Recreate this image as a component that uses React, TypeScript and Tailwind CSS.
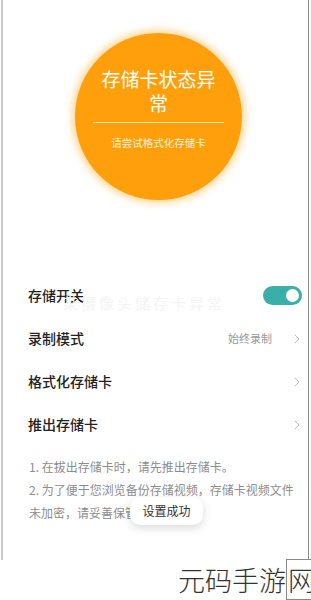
import { ChevronRight } from "lucide-react";

function Row({ label, value, children }: { label: string; value?: string; children?: React.ReactNode }) {
  return (
    <div className="flex items-center justify-between h-[43px] pl-[25px] pr-[3px]">
      <span className="text-[14px] font-medium text-[#222]">{label}</span>
      {children ?? (
        <div className="flex items-center gap-[17px]">
          {value && <span className="text-[11px] text-[#999]">{value}</span>}
          <ChevronRight size={16} strokeWidth={1.5} className="text-[#bbb]" />
        </div>
      )}
    </div>
  );
}

export default function App() {
  return (
    <div
      className="w-[311px] h-[600px] bg-white relative overflow-hidden"
      style={{ fontFamily: '"Noto Sans CJK SC", "Noto Sans", sans-serif' }}
    >
      <div className="ml-px w-[308px] h-[560px] border-l-2 border-r border-l-[#c8c8c8] border-r-[#8a8a8a] bg-white relative">
        {/* status circle */}
        <div className="flex justify-center pt-[33px] pl-[6px]">
          <div className="w-[167px] h-[167px] rounded-full bg-[#ff9f0c] shadow-[0_0_6px_4px_rgba(255,180,60,0.45)] flex flex-col items-center pt-[34px] px-[18px]">
            <div className="text-[19px] leading-[24px] text-white text-center px-[4px]">存储卡状态异常</div>
            <div className="w-full h-px bg-[#ffe3b5] mt-[7px]" />
            <div className="text-[10.5px] text-[#fff2dc] mt-[12px]">请尝试格式化存储卡</div>
          </div>
        </div>

        {/* settings */}
        <div className="mt-[74px] relative">
          <Row label="存储开关">
            <div className="w-[39px] h-[19px] rounded-full bg-[#3aafa9] flex items-center justify-end pr-[3px] mr-[3px]">
              <div className="w-[13px] h-[13px] rounded-full bg-white" />
            </div>
          </Row>
          <Row label="录制模式" value="始终录制" />
          <Row label="格式化存储卡" />
          <Row label="推出存储卡" />
          <div className="absolute left-[60px] top-[18px] text-[15px] text-[#f4f4f4] tracking-[3px] pointer-events-none">
            某摄像头储存卡异常
          </div>
        </div>

        {/* notes */}
        <div className="pl-[26px] pr-[8px] mt-[9px] text-[12px] leading-[23px] text-[#8c8c8c]">
          <p>1. 在拔出存储卡时，请先推出存储卡。</p>
          <p>2. 为了便于您浏览备份存储视频，存储卡视频文件未加密，请妥善保管。</p>
        </div>

        {/* toast */}
        <div className="absolute left-[127px] top-[497px] w-[73px] h-[28px] rounded-[10px] bg-white shadow-[0_3px_10px_rgba(0,0,0,0.15)] flex items-center justify-center text-[12px] text-[#333]">
          设置成功
        </div>
      </div>

      {/* watermark */}
      <div className="absolute right-[-6px] top-[563px] text-[27px] leading-[34px] text-[#333] font-light">
        元码手游<span className="border border-[#888] px-px">网</span>
      </div>
    </div>
  );
}
